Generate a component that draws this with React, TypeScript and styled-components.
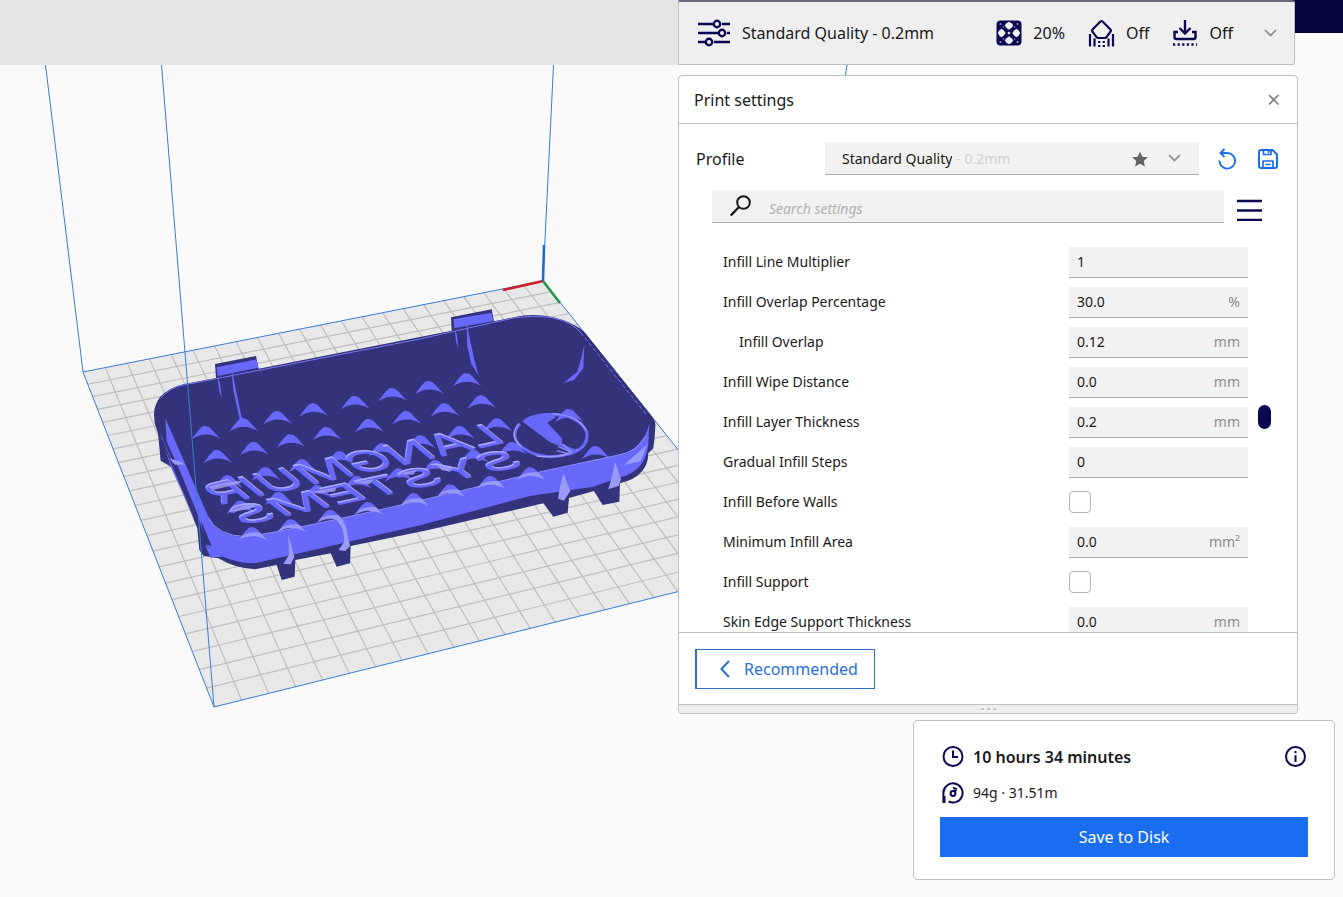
import React from 'react';
import styled, { createGlobalStyle } from 'styled-components';

const NAVY = '#0a0850';
const BLUE = '#196ef0';

const GlobalStyle = createGlobalStyle`
  *, *::before, *::after { box-sizing: border-box; }
  body { margin: 0; background: #fafafa; }
  body, button, input, select {
    font-family: "Noto Sans", "Open Sans", sans-serif;
    font-size: 14px;
    line-height: 20px;
    color: #191919;
  }
  button { cursor: pointer; }
  svg { display: block; flex: none; }
`;

const Page = styled.div`
  position: relative;
  min-height: 100vh;
  overflow: hidden;
  display: flex;
  flex-direction: column;
  align-items: flex-end;
`;

const Scene = styled.svg`
  position: absolute;
  left: 0;
  top: 0;
`;

const TopBar = styled.header`
  position: relative;
  align-self: stretch;
  display: flex;
  align-items: flex-start;
  height: 65px;
  background: linear-gradient(#06043c, #06043c) right top / 60px 33px no-repeat;
`;

const StageMenu = styled.div`
  flex: 1;
  align-self: stretch;
  background: #e5e5e5;
`;

const SummaryBar = styled.button`
  display: flex;
  align-items: center;
  width: 617px;
  height: 65px;
  margin-right: 48px;
  padding: 0 17px 0 18px;
  background: #efefef;
  border: 1px solid #c0c0c0;
  border-top: 2px solid #6a6880;
  border-radius: 0 3px 3px 0;
  font-size: 16px;
  line-height: 22px;
`;

const SummaryItem = styled.span<{ $push?: boolean }>`
  display: flex;
  align-items: center;
  gap: 11px;
  margin-left: ${(p) => (p.$push ? 'auto' : '0')};
  margin-right: ${(p) => (p.$push === undefined ? '0' : '23px')};
`;

const ChevronSlot = styled.span`
  margin-left: 8px;
`;

const Panel = styled.section`
  position: relative;
  width: 620px;
  margin: 10px 45px 0 0;
  background: #fff;
  border: 1px solid #c0c0c0;
  border-radius: 4px;
`;

const PanelHeader = styled.div`
  display: flex;
  align-items: center;
  justify-content: space-between;
  height: 48px;
  padding: 0 17px 0 15px;
  border-bottom: 1px solid #c0c0c0;
`;

const Title = styled.h2`
  margin: 0;
  font-size: 16px;
  font-weight: 400;
  line-height: 22px;
`;

const IconButton = styled.button`
  display: flex;
  padding: 0;
  border: 0;
  background: none;
`;

const ProfileRow = styled.div`
  display: flex;
  align-items: center;
  margin: 18px 19px 0 17px;
`;

const ProfileLabel = styled.label`
  width: 129px;
  font-size: 16px;
  line-height: 22px;
`;

const ProfileBox = styled.div`
  flex: 1;
  display: flex;
  align-items: center;
  height: 33px;
  margin-right: 19px;
  padding: 1px 18px 0 17px;
  background: #f2f2f2;
  border-bottom: 1px solid #aeaeae;
`;

const ProfileSelect = styled.select`
  appearance: none;
  field-sizing: content;
  margin: 0;
  padding: 0;
  border: 0;
  background: none;
`;

const ProfileHint = styled.span`
  flex: 1;
  padding-left: 4px;
  color: #d0d0d0;
`;

const ProfileIcons = styled.span`
  display: flex;
  align-items: center;
  gap: 20px;
`;

const ProfileActions = styled.div`
  display: flex;
  gap: 21px;
`;

const SearchRow = styled.div`
  display: flex;
  align-items: center;
  gap: 13px;
  margin: 15px 35px 0 33px;
`;

const SearchBox = styled.label`
  flex: 1;
  display: flex;
  align-items: center;
  gap: 18px;
  height: 33px;
  padding: 0 18px;
  background: #f2f2f2;
  border-bottom: 1px solid #aeaeae;
`;

const SearchInput = styled.input`
  flex: 1;
  min-width: 0;
  padding: 5px 0 0;
  border: 0;
  background: none;
  &::placeholder { color: #b0b0b0; font-style: italic; opacity: 1; }
`;

const SettingsArea = styled.div`
  display: flex;
  gap: 10px;
  height: 390px;
  margin-top: 19px;
  padding: 0 26px 0 44px;
  overflow: hidden;
`;

const SettingsList = styled.div`
  flex: 1;
`;

const SettingRow = styled.div`
  display: flex;
  align-items: center;
  height: 40px;
`;

const SettingLabel = styled.label<{ $indent?: boolean }>`
  flex: 1;
  padding-left: ${(p) => (p.$indent ? '16px' : '0')};
`;

const Control = styled.div`
  display: flex;
  flex: none;
  width: 179px;
`;

const Field = styled.div`
  flex: 1;
  min-width: 0;
  display: flex;
  align-items: center;
  height: 31px;
  padding: 0 8px;
  background: #f2f2f2;
  border-bottom: 1px solid #aeaeae;
`;

const FieldInput = styled.input`
  flex: 1;
  min-width: 0;
  padding: 0;
  border: 0;
  background: none;
`;

const Unit = styled.span`
  color: #8c8c8c;
`;

const Tick = styled.input`
  appearance: none;
  width: 22px;
  height: 22px;
  margin: 0;
  border: 1px solid #b4b4b4;
  border-radius: 4px;
  background: #fff;
  &:checked { background: ${BLUE}; }
`;

const Track = styled.div`
  flex: none;
  width: 13px;
  padding-top: 163px;
`;

const Thumb = styled.div`
  height: 24px;
  border-radius: 7px;
  background: ${NAVY};
`;

const PanelFooter = styled.div`
  padding: 16px 16px 15px;
  border-top: 1px solid #c0c0c0;
`;

const RecommendedButton = styled.button`
  display: flex;
  align-items: center;
  gap: 14px;
  height: 40px;
  padding: 0 16px 0 23px;
  border: 1px solid #2f6cc8;
  border-left-width: 2px;
  background: #fff;
  color: #2a6fdc;
  font-size: 16px;
  line-height: 22px;
`;

const ResizeHandle = styled.div`
  display: flex;
  justify-content: center;
  gap: 3px;
  height: 9px;
  padding-top: 3px;
  background: #efefef;
  border-top: 1px solid #c0c0c0;
  border-radius: 0 0 4px 4px;
`;

const Dot = styled.span`
  width: 3px;
  height: 2px;
  background: #c8c8c8;
`;

const ActionCard = styled.section`
  position: relative;
  width: 422px;
  margin: 6px 8px 0 0;
  padding: 24px 26px 22px;
  background: #fff;
  border: 1px solid #c0c0c0;
  border-radius: 4px;
`;

const EstimateRow = styled.div`
  display: flex;
  align-items: center;
  gap: 9px;
  height: 24px;
  margin-bottom: 12px;
  padding: 0 2px;
`;

const PrintTime = styled.strong`
  flex: 1;
  font-size: 16px;
  font-weight: 600;
  line-height: 22px;
`;

const SaveButton = styled.button`
  width: 100%;
  height: 40px;
  border: 0;
  background: ${BLUE};
  color: #fff;
  font-size: 16px;
  line-height: 22px;
`;

/* ---------- icons ---------- */

const SlidersIcon = () => (
  <svg width="34" height="28" viewBox="0 0 34 28" fill="none" stroke={NAVY} strokeWidth="2.4">
    <path d="M1 5h15M25 5h8M1 14h20M30 14h3M1 23h7M17 23h16" />
    <circle cx="20" cy="5" r="3.2" />
    <circle cx="25" cy="14" r="3.2" />
    <circle cx="12" cy="23" r="3.2" />
  </svg>
);

const InfillIcon = () => (
  <svg width="26" height="26" viewBox="0 0 26 26">
    <rect x="0.500" y="0.500" width="25" height="25" rx="4" fill={NAVY} />
    <g fill="#efefef">
      <path d="M13 1.800Q16 3 17.300 5.500Q16 8 13 9.700Q10 8 8.700 5.500Q10 3 13 1.800z" />
      <path d="M13 16.300Q16 18 17.300 20.500Q16 23 13 24.200Q10 23 8.700 20.500Q10 18 13 16.300z" />
      <path d="M5.500 8.700Q8 10 9.700 13Q8 16 5.500 17.300Q3 16 1.800 13Q3 10 5.500 8.700z" />
      <path d="M20.500 8.700Q23 10 24.200 13Q23 16 20.500 17.300Q18 16 16.300 13Q18 10 20.500 8.700z" />
      <path d="M13 11.400l1.600 1.600-1.600 1.600-1.600-1.600z" />
    </g>
    <g fill="#9a99b8">
      <circle cx="4.500" cy="4" r="1" /><circle cx="21.500" cy="4" r="1" />
      <circle cx="4.500" cy="22" r="1" /><circle cx="21.500" cy="22" r="1" />
      <circle cx="7.500" cy="7" r="0.800" /><circle cx="18.500" cy="7" r="0.800" />
      <circle cx="7.500" cy="19" r="0.800" /><circle cx="18.500" cy="19" r="0.800" />
    </g>
  </svg>
);

const SupportIcon = () => (
  <svg width="27" height="30" viewBox="0 0 27 30" fill="none" stroke={NAVY} strokeWidth="2.200" strokeLinejoin="round">
    <path d="M12.500 3.500a1.500 1.500 0 0 1 2 0l8 8a1.500 1.500 0 0 1 .1 2L18.300 19.300a2 2 0 0 1-1.500.7h-6.600a2 2 0 0 1-1.500-.7l-4.300-5.800a1.500 1.500 0 0 1 .1-2z" />
    <path d="M2 16v12.500M6.500 20.500v8M20.500 20.500v8M25 16v12.500" />
    <path d="M11.200 23v6M15.800 23v6" strokeDasharray="2 2" />
  </svg>
);

const AdhesionIcon = () => (
  <svg width="26" height="28" viewBox="0 0 26 28" fill="none" stroke={NAVY} strokeWidth="2.400">
    <path d="M13 1v13M7.500 9l5.500 5.500L18.500 9" />
    <path d="M6 13H2.500v5a2 2 0 0 0 2 2h17a2 2 0 0 0 2-2v-5H20" />
    <path d="M1 25.500h24" strokeDasharray="2.200 2.400" />
  </svg>
);

const ChevronDown = () => (
  <svg width="13" height="9" viewBox="0 0 13 9" fill="none" stroke="#8a8a8a" strokeWidth="1.700">
    <path d="M1 1l5.500 5.500L12 1" />
  </svg>
);

const CloseIcon = () => (
  <svg width="12" height="12" viewBox="0 0 12 12" stroke="#808080" strokeWidth="1.700">
    <path d="M1 1l9.500 9.500M10.500 1L1 10.500" />
  </svg>
);

const StarIcon = () => (
  <svg width="16" height="16" viewBox="0 0 16 16" fill="#646464">
    <path d="M8 .5l2.300 5.200 5.500.6-4.100 3.800 1.200 5.400L8 12.700l-4.900 2.800 1.200-5.400L.2 6.300l5.500-.6z" />
  </svg>
);

const UndoIcon = () => (
  <svg width="19" height="22" viewBox="0 0 19 22" fill="none" stroke={BLUE} strokeWidth="1.900">
    <path d="M1.500 12.500a7.800 7.800 0 1 0 7.800-7.500H3" />
    <path d="M6.500 1L2.500 5l4 4" />
  </svg>
);

const SaveIcon = () => (
  <svg width="20" height="22" viewBox="0 0 20 22" fill="none" stroke={BLUE} strokeWidth="2" strokeLinejoin="round">
    <path d="M1 4a2 2 0 0 1 2-2h11.500L19 6.500V18a2 2 0 0 1-2 2H3a2 2 0 0 1-2-2z" />
    <path d="M5.500 2v4.500h7.500V2M5 20v-7h10v7M10.500 3v2M7.500 16.500h5" strokeWidth="1.700" />
  </svg>
);

const SearchIcon = () => (
  <svg width="21" height="22" viewBox="0 0 21 22" fill="none" stroke="#191919" strokeWidth="2">
    <circle cx="13.500" cy="7.500" r="6.300" />
    <path d="M9 12L.8 20.500" strokeWidth="2.400" />
  </svg>
);

const MenuIcon = () => (
  <svg width="25" height="28" viewBox="0 0 25 28" stroke={NAVY} strokeWidth="2.400">
    <path d="M0 8h25M0 17.500h25M0 27h25" />
  </svg>
);

const BackIcon = () => (
  <svg width="10" height="18" viewBox="0 0 10 18" fill="none" stroke="#2a6fdc" strokeWidth="2">
    <path d="M9 1L1.500 9 9 17" />
  </svg>
);

const ClockIcon = () => (
  <svg width="22" height="22" viewBox="0 0 22 22" fill="none" stroke={NAVY} strokeWidth="2">
    <circle cx="11" cy="10.500" r="9.500" />
    <path d="M11 4.500v6.500h5" />
  </svg>
);

const SpoolIcon = () => (
  <svg width="22" height="22" viewBox="0 0 22 22" fill="none" stroke={NAVY} strokeWidth="2">
    <path d="M1.400 21V11A9.600 9.600 0 1 1 6.500 19.400M2.500 14v7" />
    <circle cx="11" cy="11.500" r="2.400" />
    <path d="M11 5.500l4 1.800M11.500 8l3 1.200" strokeWidth="1.800" />
  </svg>
);

const InfoIcon = () => (
  <svg width="22" height="22" viewBox="0 0 22 22" fill="none" stroke={NAVY} strokeWidth="2">
    <circle cx="11.500" cy="10.500" r="9.500" />
    <path d="M11.500 9.200V16M11.500 5v2.200" />
  </svg>
);

/* ---------- 3D build plate ---------- */

type Pt = [number, number];

const CELLS = 22;
const PLATE: [Pt, Pt, Pt, Pt] = [[543, 281], [83, 372], [214, 707], [773, 568]];

// Perspective projection of unit plate coordinates onto the view.
const project = (u: number, v: number): Pt => {
  const [[x0, y0], [x1, y1], [x2, y2], [x3, y3]] = PLATE;
  const dx1 = x1 - x2, dx2 = x3 - x2, sx = x0 - x1 + x2 - x3;
  const dy1 = y1 - y2, dy2 = y3 - y2, sy = y0 - y1 + y2 - y3;
  const det = dx1 * dy2 - dx2 * dy1;
  const g = (sx * dy2 - dx2 * sy) / det;
  const h = (dx1 * sy - sx * dy1) / det;
  const w = g * u + h * v + 1;
  return [
    ((x1 - x0 + g * x1) * u + (x3 - x0 + h * x3) * v + x0) / w,
    ((y1 - y0 + g * y1) * u + (y3 - y0 + h * y3) * v + y0) / w,
  ];
};

const segment = (a: Pt, b: Pt) => `M${a[0]} ${a[1]}L${b[0]} ${b[1]}`;

const gridPath = Array.from({ length: CELLS - 1 }, (_, i) => {
  const t = (i + 1) / CELLS;
  return segment(project(t, 0), project(t, 1)) + segment(project(0, t), project(1, t));
}).join('');

const floorBumps: Pt[] = [
  [195, 408], [308, 385], [410, 363], [518, 340], [643, 318], [755, 294], [865, 273], [978, 250],
  [230, 480], [340, 456], [450, 433], [558, 411], [685, 387], [797, 363], [912, 340], [1022, 316],
  [262, 556], [375, 532], [485, 508], [598, 484], [725, 460], [840, 436], [958, 408], [1070, 385], [1285, 357],
  [300, 632], [415, 606], [530, 585], [650, 558], [775, 535], [885, 510], [1000, 480], [1115, 456], [1365, 468],
];
const wallBumps: Pt[] = [
  [335, 712], [452, 688], [570, 660], [683, 636], [820, 610], [930, 583], [1050, 558], [1170, 532],
];

const BUMP = 'M-40 40Q-14 2 -4 0Q10 -2 18 8L46 38Q0 12 -40 40z';
const CREST = 'M-40 38L-24 22Q2 12 26 16L46 38Q0 14 -40 38z';

const Model = () => (
  <g transform="translate(140 290) scale(0.33333)">
    <path
      fill="#33337c"
      d="M42 375Q42 345 60 322Q85 293 130 283L228 264 225 222 348 198 356 236 935 122 933 82 1055 58 1062 94 1140 78Q1190 70 1240 82Q1300 96 1335 128L1538 382Q1548 395 1546 410L1544 440 1540 475 1525 490Q1524 560 1440 580L1438 635 1388 645 1362 603 1287 624 1283 668 1240 680 1210 640 865 720 632 768 630 820 590 830 572 790 466 810 464 860 425 870 410 825 345 838Q285 835 235 805L190 797 178 780 172 715 100 535 62 512 54 430 44 400z"
    />
    {floorBumps.map(([x, y]) => (
      <path key={`${x}-${y}`} d={BUMP} transform={`translate(${x} ${y})`} fill="#6868fa" />
    ))}
    <g fill="#6868fa">
      <path d="M76 385L205 680Q230 740 320 740Q420 728 840 632L1180 550 1440 494Q1510 478 1528 400L1525 465Q1515 545 1440 562L1360 590 1170 618 840 706 465 793 345 820Q250 818 200 765L172 670 110 520 80 455z" />
      <path d="M60 428L100 520 170 685 160 680 92 530z" />
      <path d="M195 765L248 800 212 803z" />
      <path d="M230 232L349 208 355 233 233 258z" />
      <path d="M940 88L1055 68 1060 93 943 115z" />
      <path d="M274 235L284 280 302 370 313 407 298 385 280 300z" />
      <path d="M232 262L240 280 245 323 238 305z" />
      <path d="M980 90L986 130 1002 205 1016 258 994 222 981 165z" />
      <path d="M944 118L951 135 955 175 948 155z" />
      <path d="M1333 165L1330 235 1302 270 1270 279 1312 245 1325 200z" />
      {wallBumps.map(([x, y]) => (
        <path key={x} d={BUMP} transform={`translate(${x} ${y})`} />
      ))}
    </g>
    <path d="M182 690L215 768 195 762z" fill="#33337c" />
    <path d="M66 450L165 685M100 520L176 705" stroke="#33337c" strokeWidth="4" />
    <g fill="none" stroke="#7676f4" strokeWidth="3">
      <path d="M62 325Q90 292 130 285L840 147 1120 84Q1190 74 1240 84Q1300 98 1322 128" />
      <path d="M1322 128L1520 375" strokeDasharray="12 8" />
    </g>
    <path d="M205 682Q232 738 320 740Q420 728 840 632L1180 550 1440 494Q1490 485 1515 440" fill="none" stroke="#8c8cf8" strokeWidth="3" />

    <g fontFamily="Inter, sans-serif" fontSize="100" fontWeight="400">
      <g fill="#a8a8fb">
        <text transform="matrix(-1.63 0.355 0.9 0.74 1104 452)">LANGMUIR</text>
        <text transform="matrix(-1.8 0.38 0.85 0.64 1162 521)">SYSTEMS</text>
      </g>
      <g fill="#6868fa">
        <text transform="matrix(-1.63 0.355 0.9 0.74 1106 457)">LANGMUIR</text>
        <text transform="matrix(-1.8 0.38 0.85 0.64 1164 526)">SYSTEMS</text>
      </g>
    </g>

    <g fill="none" strokeWidth="9">
      <path d="M1140 402Q1105 440 1150 475Q1200 510 1270 496Q1350 480 1340 425Q1315 375 1235 373Q1190 373 1155 390" stroke="#6868fa" />
      <path d="M1137 400Q1104 436 1145 472M1238 371Q1315 376 1338 420M1190 498Q1270 506 1312 478" stroke="#9c9cfb" strokeWidth="4" />
    </g>
    <path d="M1145 393L1180 378 1215 374 1250 380 1222 398 1266 445 1266 462 1315 482 1300 492 1258 468 1228 455z" fill="#6868fa" />
    <path d="M1255 470L1290 485M1268 462L1298 490M1250 482L1290 492" stroke="#8c8cfa" strokeWidth="4" />

    <g fill="#a2a2fb" fillOpacity="0.8">
      {wallBumps.map(([x, y]) => (
        <path key={x} d={CREST} transform={`translate(${x} ${y})`} />
      ))}
      <path d="M205 592Q230 578 305 572L300 580 220 600z" />
      <path d="M515 605L590 592 585 604 540 610z" />
      <path d="M640 578L700 568 690 582z" />
      <path d="M770 552L830 540 820 554z" />
      <path d="M885 520L940 532 930 545 905 540z" />
      <path d="M260 666L330 640 350 650 300 662z" />
    </g>
    <g fill="#9a9afa">
      <path d="M445 735L463 800 452 823 430 822 447 795z" />
      <path d="M575 682Q612 688 618 712L630 768 616 783 596 780 613 755Q612 700 575 682z" />
      <path d="M1270 550L1291 602 1272 632 1254 626 1260 590z" />
      <path d="M1425 515L1443 568 1436 588 1405 598 1416 560z" />
      <path d="M1452 525L1522 463 1502 514z" />
      <path d="M88 505L125 516 135 524 105 524z" />
    </g>
  </g>
);

const BuildPlate = () => (
  <Scene width="860" height="720" viewBox="0 0 860 720" role="img" aria-label="Model on the build plate">
    <path d={`M${PLATE.map((p) => p.join(' ')).join('L')}z`} fill="#e8e8e8" />
    <path d={gridPath} stroke="#bebebe" strokeWidth="1.200" fill="none" />
    <path d={`M${PLATE.map((p) => p.join(' ')).join('L')}z`} fill="none" stroke="#3a7bd5" />
    <path d="M45.500 65L83 372M553.500 65L543 281M847 65L773 568" stroke="#3a7bd5" fill="none" />
    <Model />
    <path d="M161.500 65L214 707" stroke="#3a7bd5" fill="none" />
    <path d="M543 281L503 290" stroke="#c8202c" strokeWidth="2.500" />
    <path d="M543 281L560 303" stroke="#23954a" strokeWidth="2.500" />
    <path d="M543 281L544 245" stroke="#1c66dc" strokeWidth="2.500" />
  </Scene>
);

/* ---------- settings ---------- */

interface Setting {
  id: string;
  label: string;
  value?: string;
  unit?: string;
  indent?: boolean;
}

const settings: Setting[] = [
  { id: 'multiplier', label: 'Infill Line Multiplier', value: '1' },
  { id: 'overlap-pct', label: 'Infill Overlap Percentage', value: '30.0', unit: '%' },
  { id: 'overlap', label: 'Infill Overlap', value: '0.12', unit: 'mm', indent: true },
  { id: 'wipe', label: 'Infill Wipe Distance', value: '0.0', unit: 'mm' },
  { id: 'layer', label: 'Infill Layer Thickness', value: '0.2', unit: 'mm' },
  { id: 'gradual', label: 'Gradual Infill Steps', value: '0' },
  { id: 'before', label: 'Infill Before Walls' },
  { id: 'min-area', label: 'Minimum Infill Area', value: '0.0', unit: 'mm²' },
  { id: 'support', label: 'Infill Support' },
  { id: 'skin-edge', label: 'Skin Edge Support Thickness', value: '0.0', unit: 'mm' },
];

export default function App() {
  return (
    <>
      <GlobalStyle />
      <Page>
        <BuildPlate />
        <TopBar>
          <StageMenu />
          <SummaryBar type="button" aria-expanded="true">
            <SummaryItem>
              <SlidersIcon />
              Standard Quality - 0.2mm
            </SummaryItem>
            <SummaryItem $push>
              <InfillIcon />
              20%
            </SummaryItem>
            <SummaryItem $push={false}>
              <SupportIcon />
              Off
            </SummaryItem>
            <SummaryItem $push={false}>
              <AdhesionIcon />
              Off
            </SummaryItem>
            <ChevronSlot>
              <ChevronDown />
            </ChevronSlot>
          </SummaryBar>
        </TopBar>

        <Panel>
          <PanelHeader>
            <Title>Print settings</Title>
            <IconButton type="button" aria-label="Close">
              <CloseIcon />
            </IconButton>
          </PanelHeader>

          <ProfileRow>
            <ProfileLabel htmlFor="profile">Profile</ProfileLabel>
            <ProfileBox>
              <ProfileSelect id="profile" defaultValue="standard">
                <option value="standard">Standard Quality</option>
              </ProfileSelect>
              <ProfileHint>- 0.2mm</ProfileHint>
              <ProfileIcons>
                <StarIcon />
                <ChevronDown />
              </ProfileIcons>
            </ProfileBox>
            <ProfileActions>
              <IconButton type="button" aria-label="Discard changes">
                <UndoIcon />
              </IconButton>
              <IconButton type="button" aria-label="Save profile">
                <SaveIcon />
              </IconButton>
            </ProfileActions>
          </ProfileRow>

          <SearchRow>
            <SearchBox>
              <SearchIcon />
              <SearchInput type="text" placeholder="Search settings" aria-label="Search settings" />
            </SearchBox>
            <IconButton type="button" aria-label="Setting visibility">
              <MenuIcon />
            </IconButton>
          </SearchRow>

          <SettingsArea>
            <SettingsList>
              {settings.map((s) => (
                <SettingRow key={s.id}>
                  <SettingLabel htmlFor={s.id} $indent={s.indent}>
                    {s.label}
                  </SettingLabel>
                  <Control>
                    {s.value === undefined ? (
                      <Tick type="checkbox" id={s.id} />
                    ) : (
                      <Field>
                        <FieldInput type="text" id={s.id} defaultValue={s.value} />
                        {s.unit && <Unit>{s.unit}</Unit>}
                      </Field>
                    )}
                  </Control>
                </SettingRow>
              ))}
            </SettingsList>
            <Track>
              <Thumb />
            </Track>
          </SettingsArea>

          <PanelFooter>
            <RecommendedButton type="button">
              <BackIcon />
              Recommended
            </RecommendedButton>
          </PanelFooter>
          <ResizeHandle>
            <Dot />
            <Dot />
            <Dot />
          </ResizeHandle>
        </Panel>

        <ActionCard>
          <EstimateRow>
            <ClockIcon />
            <PrintTime>10 hours 34 minutes</PrintTime>
            <IconButton type="button" aria-label="Print details">
              <InfoIcon />
            </IconButton>
          </EstimateRow>
          <EstimateRow>
            <SpoolIcon />
            94g · 31.51m
          </EstimateRow>
          <SaveButton type="button">Save to Disk</SaveButton>
        </ActionCard>
      </Page>
    </>
  );
}
